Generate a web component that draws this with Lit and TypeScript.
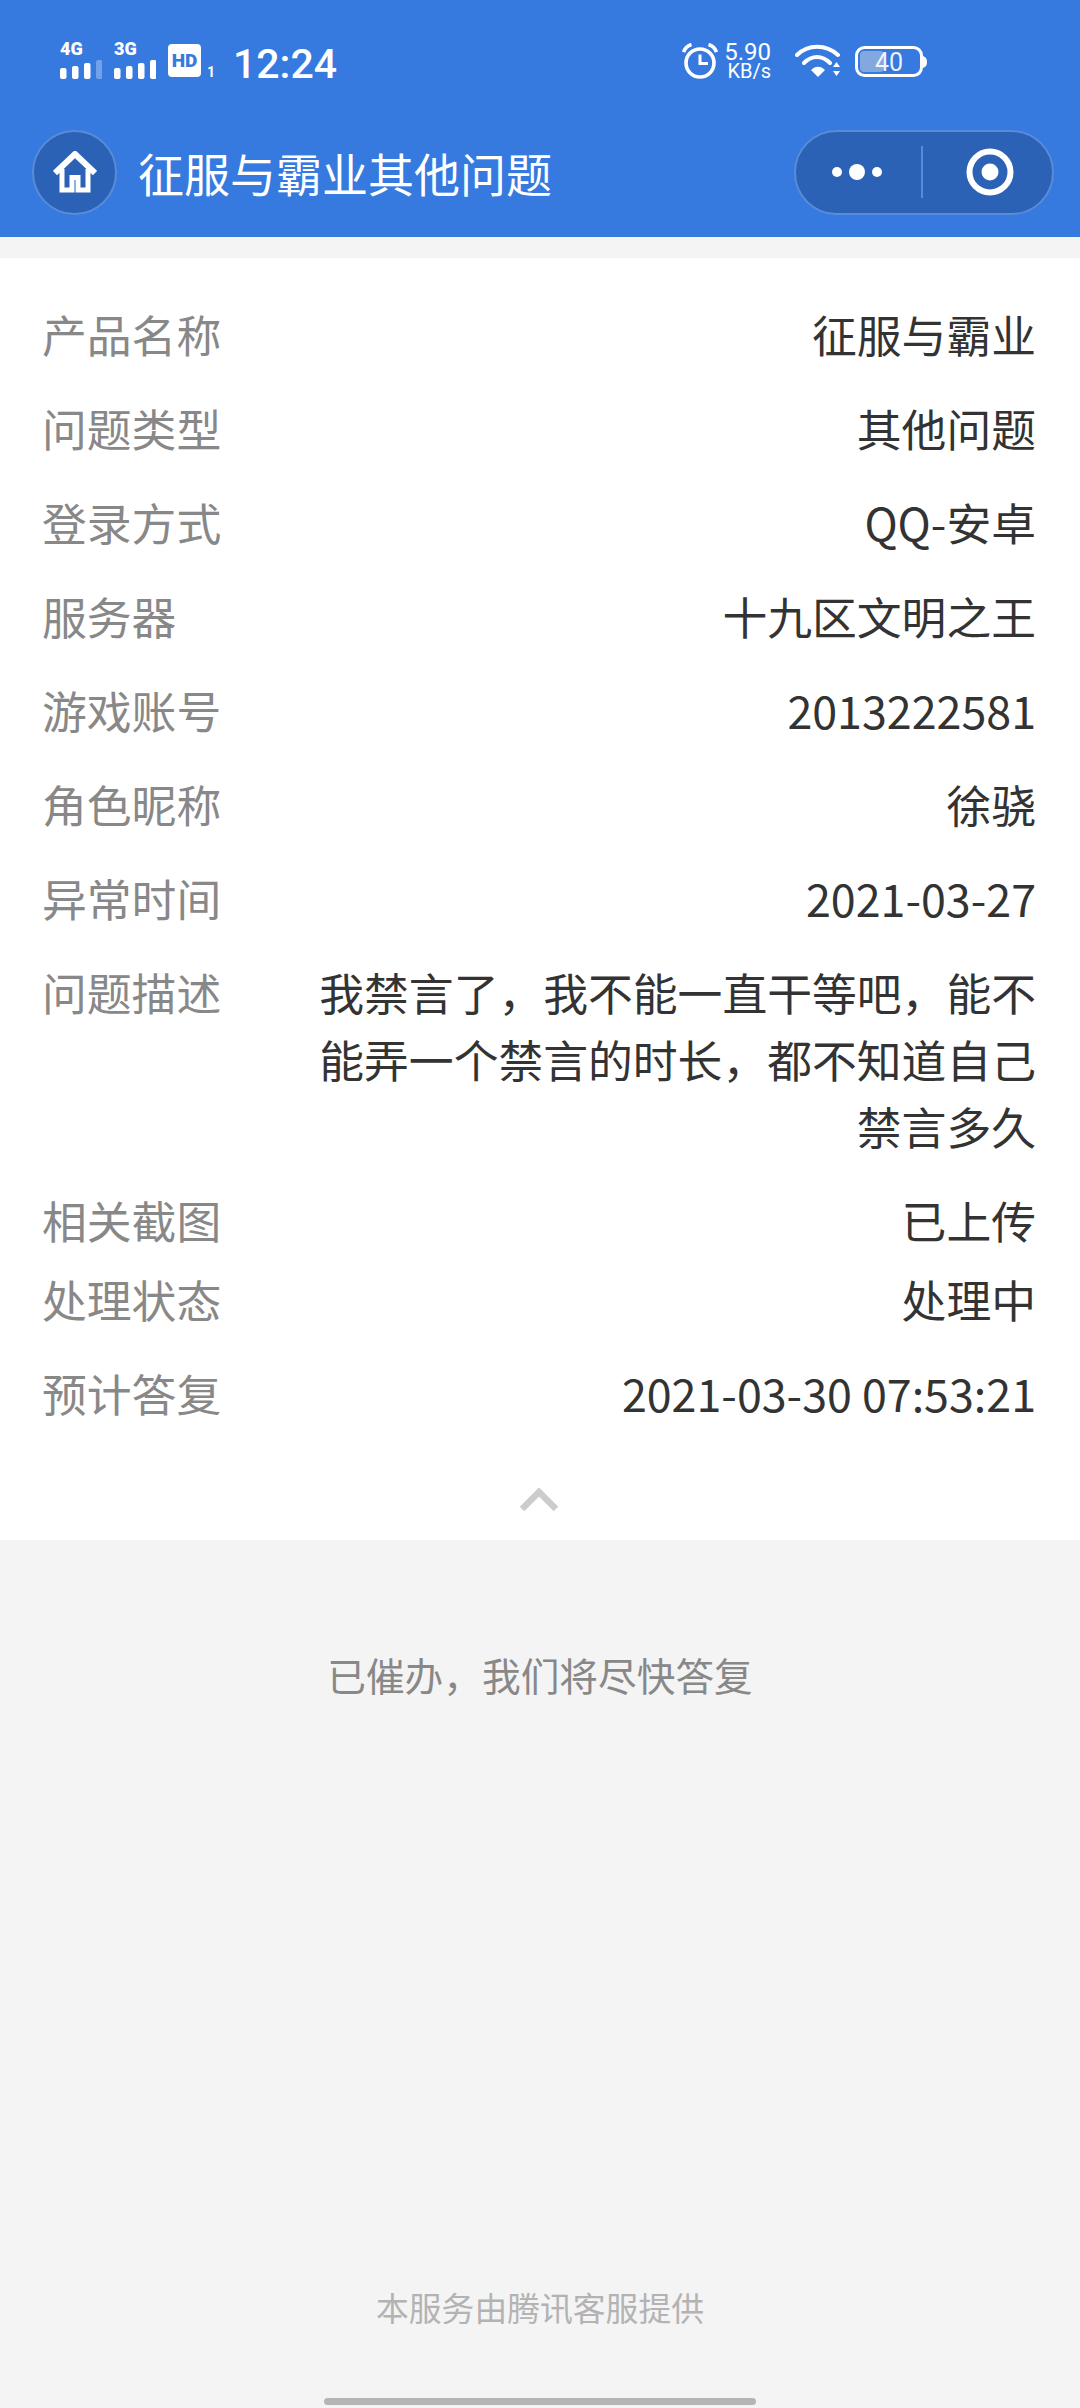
import { LitElement, html, svg, css } from "lit";
import { customElement } from "lit/decorators.js";

const rows: [string, string, string?][] = [
  ["产品名称", "征服与霸业"],
  ["问题类型", "其他问题"],
  ["登录方式", "QQ-安卓"],
  ["服务器", "十九区文明之王"],
  ["游戏账号", "2013222581"],
  ["角色昵称", "徐骁"],
  ["异常时间", "2021-03-27"],
  ["问题描述", "我禁言了\uFF0C我不能一直干等吧\uFF0C能不能弄一个禁言的时长\uFF0C都不知道自己禁言多久"],
  ["相关截图", "已上传", "tight"],
  ["处理状态", "处理中"],
  ["预计答复", "2021-03-30 07:53:21"],
];

@customElement("app-root")
export class AppRoot extends LitElement {
  static styles = css`
    :host {
      display: flex;
      flex-direction: column;
      height: 100vh;
      background: #f4f4f4;
      font-family: "Noto Sans CJK SC", "Noto Sans", sans-serif;
      overflow: hidden;
    }
    .top { background: #367ae0; height: 237px; flex: none; color: #fff; display: flex; flex-direction: column; }
    .status { height: 129px; flex: none; display: flex; justify-content: space-between; padding: 0 153px 0 60px; }
    .group { display: flex; align-items: flex-start; padding-top: 38px; }
    .group svg { display: block; flex: none; }
    .s3g { margin-left: 12px; }
    .shd { margin-left: 12px; }
    .time { font-family: Roboto, sans-serif; font-size: 41px; font-weight: 500; line-height: 44px; margin-left: 19px; margin-top: 4px; }
    .alarm { margin-top: 5px; }
    .speed { font-family: Roboto, sans-serif; display: flex; flex-direction: column; align-items: flex-end; margin: 4px 0 0 7px; width: 46px; }
    .speed b { font-weight: 400; font-size: 24px; line-height: 20px; }
    .speed i { font-style: normal; font-size: 20px; line-height: 17px; margin-top: 1px; }
    .wifi { margin: 5px 0 0 24px; }
    .batt { margin: 8px 0 0 14px; }
    .nav { height: 86px; display: flex; align-items: center; padding: 0 26px 0 32px; }
    .home { width: 85px; height: 85px; box-sizing: border-box; border-radius: 50%; background: #2b62b5; border: 2px solid #5a8bd8; display: flex; align-items: center; justify-content: center; flex: none; }
    .title { font-size: 46px; line-height: 60px; margin-left: 21px; flex: 1; white-space: nowrap; }
    .capsule { width: 260px; height: 85px; box-sizing: border-box; border-radius: 43px; background: #2b62b5; border: 2px solid #5a8bd8; display: flex; align-items: center; flex: none; }
    .capsule .more { width: 127px; height: 52px; display: flex; align-items: center; justify-content: center; gap: 7px; border-right: 2px solid #5a8bd8; box-sizing: border-box; padding-right: 3px; }
    .dot { width: 10px; height: 10px; border-radius: 50%; background: #fff; }
    .dot.big { width: 16px; height: 16px; }
    .capsule .close { flex: 1; display: flex; align-items: center; justify-content: center; padding-left: 4px; }
    .card { background: #fff; margin-top: 21px; padding: 42px 44px 0 42px; height: 1282px; box-sizing: border-box; flex: none; display: flex; flex-direction: column; }
    .row { display: flex; justify-content: space-between; font-size: 44.8px; line-height: 67px; margin-bottom: 27px; }
    .row.tight { margin-bottom: 12px; }
    .label { color: #888; width: 271px; flex: none; }
    .value { color: #333; flex: 1; text-align: right; }
    .up { display: flex; justify-content: center; margin-top: 35px; }
    .rest { flex: 1; display: flex; flex-direction: column; align-items: center; position: relative; }
    .hint { color: #888; font-size: 38.7px; line-height: 56px; margin-top: 106px; }
    .spacer { flex: 1; }
    .foot { color: #b3b3b3; font-size: 32.8px; line-height: 48px; margin-bottom: 77px; }
    .bar { position: absolute; left: 324px; bottom: 3px; width: 432px; height: 7px; border-radius: 4px; background: #b5b5b5; }
  `;

  private svgBars(last: number) {
    return svg`<g fill="#fff"><rect x="0" y="30" width="6.500" height="11" rx="2"/><rect x="12" y="28" width="6.500" height="13" rx="2"/><rect x="24" y="25" width="6.500" height="16" rx="2"/></g>
      <rect x="36" y="22" width="6.500" height="19" rx="2" fill="#fff" fill-opacity=${last}/>`;
  }

  render() {
    return html`
      <div class="top">
        <div class="status">
          <div class="group">
            <svg width="42" height="42" viewBox="0 0 42 42">
              <text x="0" y="17" font-family="Roboto" font-weight="900" font-size="18" fill="#fff">4G</text>
              ${this.svgBars(0.3)}
            </svg>
            <svg class="s3g" width="42" height="42" viewBox="0 0 42 42">
              <text x="0" y="17" font-family="Roboto" font-weight="900" font-size="18" fill="#fff">3G</text>
              ${this.svgBars(1)}
            </svg>
            <svg class="shd" width="46" height="42" viewBox="0 0 46 42">
              <rect x="0" y="6" width="33" height="33" rx="4" fill="#fff"/>
              <text x="16.500" y="29" text-anchor="middle" font-family="Roboto" font-weight="900" font-size="19" fill="#367ae0">HD</text>
              <text x="39" y="39" font-family="Roboto" font-weight="700" font-size="14" fill="#fff">1</text>
            </svg>
            <span class="time">12:24</span>
          </div>
          <div class="group">
            <svg class="alarm" width="36" height="36" viewBox="0 0 36 36" fill="none" stroke="#fff">
              <circle cx="18" cy="20" r="14" stroke-width="3.600"/>
              <path d="M18 11.500V20.500H26" stroke-width="3"/>
              <path d="M1.500 9C3 5 6 2.500 9.500 1.500M34.500 9C33 5 30 2.500 26.500 1.500" stroke-width="3.600"/>
            </svg>
            <div class="speed"><b>5.90</b><i>KB/s</i></div>
            <svg class="wifi" width="46" height="36" viewBox="0 0 46 36" fill="none" stroke="#fff" stroke-width="4" stroke-linecap="round">
              <path d="M2 12C13 1 31 1 43 12"/>
              <path d="M9 20C17 12 27 12 35 20"/>
              <path d="M16 27L23 34L30 27C26 22.500 20 22.500 16 27Z" fill="#fff" stroke="none"/>
              <path d="M38 24L41.500 19L45 24ZM38 28L41.500 33L45 28Z" fill="#fff" stroke="none"/>
            </svg>
            <svg class="batt" width="72" height="32" viewBox="0 0 72 32">
              <rect x="1.500" y="1.500" width="65" height="28" rx="8" fill="none" stroke="#fff" stroke-width="3"/>
              <rect x="5" y="5" width="24" height="21" rx="4" fill="#cfd6e0" fill-opacity=".5"/>
              <path d="M68 10C71 11 72 13 72 16C72 19 71 21 68 22Z" fill="#fff"/>
              <text x="34" y="25" text-anchor="middle" font-family="Roboto" font-size="25" fill="#fff" fill-opacity=".92">40</text>
            </svg>
          </div>
        </div>
        <div class="nav">
          <div class="home">
            <svg width="44" height="42" viewBox="0 0 44 42" fill="none" stroke="#fff" stroke-width="6">
              <path d="M2 22L22 3L42 22" />
              <path d="M9 18V39H19V26.500H25V39H35V18" stroke-width="5"/>
            </svg>
          </div>
          <div class="title">征服与霸业其他问题</div>
          <div class="capsule">
            <div class="more"><span class="dot"></span><span class="dot big"></span><span class="dot"></span></div>
            <div class="close">
              <svg width="48" height="48" viewBox="0 0 48 48"><circle cx="24" cy="24" r="20.500" fill="none" stroke="#fff" stroke-width="6"/><circle cx="24" cy="24" r="8.500" fill="#fff"/></svg>
            </div>
          </div>
        </div>
      </div>
      <div class="card">
        ${rows.map(
          ([k, v, c]) => html`<div class="row ${c ?? ""}"><div class="label">${k}</div><div class="value">${v}</div></div>`
        )}
        <div class="up">
          <svg width="38" height="24" viewBox="0 0 38 24" fill="none" stroke="#ccc" stroke-width="6.500"><path d="M2 21L19 4L36 21"/></svg>
        </div>
      </div>
      <div class="rest">
        <div class="hint">已催办\uFF0C我们将尽快答复</div>
        <div class="spacer"></div>
        <div class="foot">本服务由腾讯客服提供</div>
        <div class="bar"></div>
      </div>
    `;
  }
}
